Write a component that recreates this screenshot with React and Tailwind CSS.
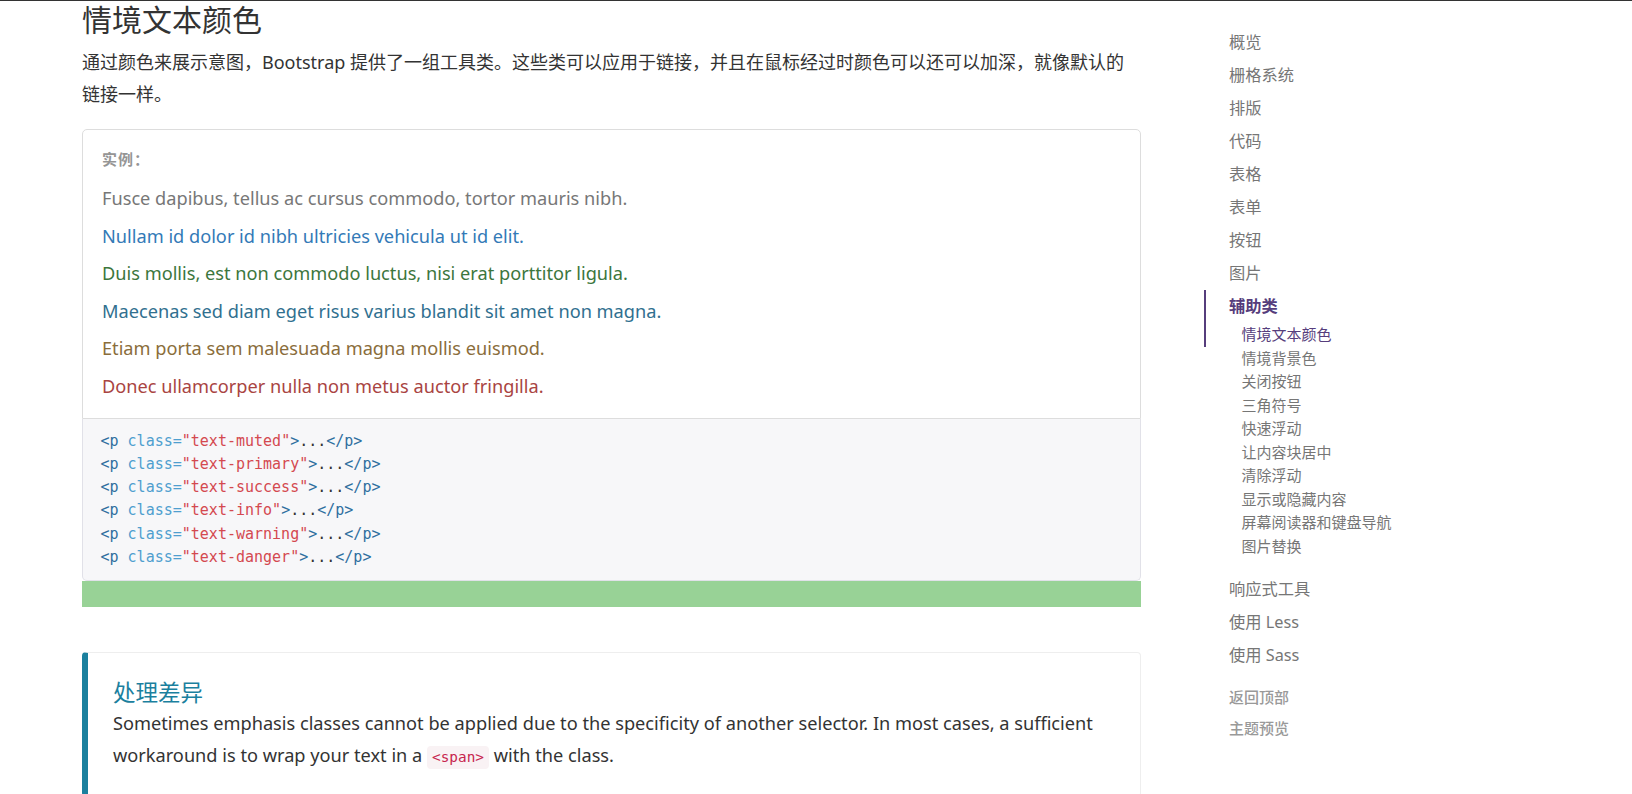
import React from 'react';

const sans = { fontFamily: '"Noto Sans", "Noto Sans CJK SC", sans-serif' };
const mono = { fontFamily: '"DejaVu Sans Mono", "Liberation Mono", monospace' };

const examples = [
  { cls: 'text-muted', color: 'text-[#777777]', text: 'Fusce dapibus, tellus ac cursus commodo, tortor mauris nibh.' },
  { cls: 'text-primary', color: 'text-[#337ab7]', text: 'Nullam id dolor id nibh ultricies vehicula ut id elit.' },
  { cls: 'text-success', color: 'text-[#3c763d]', text: 'Duis mollis, est non commodo luctus, nisi erat porttitor ligula.' },
  { cls: 'text-info', color: 'text-[#31708f]', text: 'Maecenas sed diam eget risus varius blandit sit amet non magna.' },
  { cls: 'text-warning', color: 'text-[#8a6d3b]', text: 'Etiam porta sem malesuada magna mollis euismod.' },
  { cls: 'text-danger', color: 'text-[#a94442]', text: 'Donec ullamcorper nulla non metus auctor fringilla.' },
];

const navTop = ['概览', '栅格系统', '排版', '代码', '表格', '表单', '按钮', '图片'];
const subNav = [
  '情境文本颜色',
  '情境背景色',
  '关闭按钮',
  '三角符号',
  '快速浮动',
  '让内容块居中',
  '清除浮动',
  '显示或隐藏内容',
  '屏幕阅读器和键盘导航',
  '图片替换',
];
const navBottom = ['响应式工具', '使用 Less', '使用 Sass'];

function CodeLine({ cls }) {
  return (
    <div className="whitespace-pre">
      <span className="text-[#2f6f9f]">&lt;p</span>{' '}
      <span className="text-[#4f9fcf]">class=</span>
      <span className="text-[#d44950]">"{cls}"</span>
      <span className="text-[#2f6f9f]">&gt;</span>
      <span className="text-[#333333]">...</span>
      <span className="text-[#2f6f9f]">&lt;/p&gt;</span>
    </div>
  );
}

export default function App() {
  return (
    <div className="min-h-screen bg-white border-t border-[#333333] overflow-hidden" style={sans}>
      <div className="flex items-start">
        {/* main column */}
        <main className="ml-[82px] w-[1059px] shrink-0">
          <h1 className="mt-[2px] text-[30px] leading-[33px] font-normal text-[#333333]">情境文本颜色</h1>
          <p className="mt-[11px] text-[18px] leading-[31.5px] text-[#333333]">
            通过颜色来展示意图，Bootstrap 提供了一组工具类。这些类可以应用于链接，并且在鼠标经过时颜色可以还可以加深，就像默认的链接一样。
          </p>

          <div className="mt-[19px] border border-[#dddddd] rounded-t-[5px] px-[19px] pt-[19px] pb-[19px]">
            <div className="text-[15px] leading-[21px] font-bold tracking-[1px] text-[#959595]">实例：</div>
            <div className="mt-[16px] flex flex-col gap-[12.5px]">
              {examples.map((e) => (
                <p key={e.cls} className={`text-[18.2px] leading-[25px] ${e.color}`}>
                  {e.text}
                </p>
              ))}
            </div>
          </div>

          <div
            className="bg-[#f7f7f9] border-x border-b border-[#e1e1e8] rounded-b-[5px] px-[17.5px] py-[11.25px] text-[15px] leading-[23.2px]"
            style={mono}
          >
            {examples.map((e) => (
              <CodeLine key={e.cls} cls={e.cls} />
            ))}
          </div>

          <div className="h-[26px] bg-[#98d296]" />

          <div className="mt-[45px] border border-[#eeeeee] border-l-[6px] border-l-[#1b809e] rounded-[4px] pl-[25px] pr-[25px] pt-[27px] pb-[25px]">
            <h4 className="text-[22.5px] leading-[25px] font-normal text-[#1b809e]">处理差异</h4>
            <p className="mt-[2px] text-[18.2px] leading-[32px] text-[#333333]">
              Sometimes emphasis classes cannot be applied due to the specificity of another selector. In most cases, a
              sufficient workaround is to wrap your text in a{' '}
              <code
                className="inline-block align-middle bg-[#f9f2f4] text-[#c7254e] rounded-[4px] px-[5px] text-[14.4px] leading-[23px]"
                style={mono}
              >
                &lt;span&gt;
              </code>{' '}
              with the class.
            </p>
          </div>
        </main>

        {/* sidebar */}
        <aside className="ml-[63px] w-[300px] shrink-0 pt-[25px]">
          <ul>
            {navTop.map((n) => (
              <li key={n}>
                <a className="block pl-[25px] py-[5px] text-[16.25px] leading-[23px] text-[#767676]">{n}</a>
              </li>
            ))}
            <li>
              <a className="block border-l-2 border-[#563d7c] pl-[23px] py-[5px] text-[16.25px] leading-[23px] font-bold text-[#563d7c]">
                辅助类
              </a>
              <ul className="pb-[14.5px]">
                {subNav.map((s, i) => (
                  <li key={s}>
                    <a
                      className={
                        i === 0
                          ? 'block border-l-2 border-[#563d7c] pl-[35.5px] py-[1.25px] text-[15px] leading-[21px] text-[#563d7c]'
                          : 'block pl-[37.5px] py-[1.25px] text-[15px] leading-[21px] text-[#767676]'
                      }
                    >
                      {s}
                    </a>
                  </li>
                ))}
              </ul>
            </li>
            {navBottom.map((n) => (
              <li key={n}>
                <a className="block pl-[25px] py-[5px] text-[16.25px] leading-[23px] text-[#767676]">{n}</a>
              </li>
            ))}
          </ul>
          <a className="block mt-[10px] pl-[25px] py-[5px] text-[15px] leading-[21.4px] font-medium text-[#999999]">返回顶部</a>
          <a className="block pl-[25px] py-[5px] text-[15px] leading-[21.4px] font-medium text-[#999999]">主题预览</a>
        </aside>
      </div>
    </div>
  );
}
